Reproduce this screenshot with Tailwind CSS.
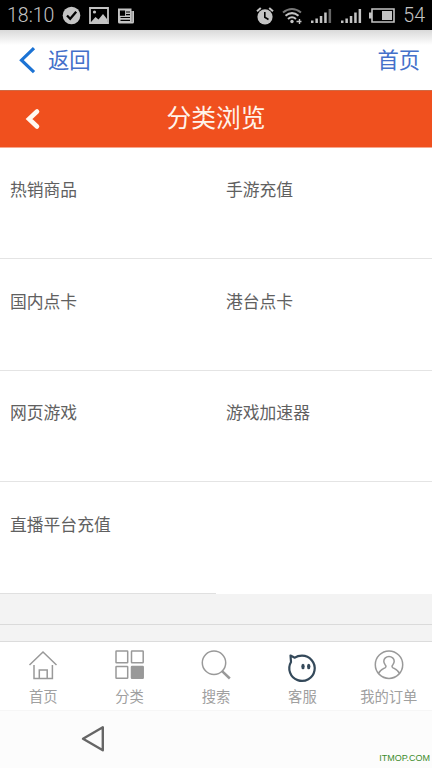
<!DOCTYPE html>
<html lang="zh-CN">
<head>
    <meta charset="UTF-8">
    <meta name="viewport" content="width=device-width, initial-scale=1.0">
    <title>分类浏览</title>
    <script src="https://cdn.jsdelivr.net/npm/@tailwindcss/browser@4"></script>
</head>
<body class="w-[432px] h-[768px] overflow-hidden flex flex-col bg-[#f3f3f3] font-['Noto_Sans_CJK_SC',sans-serif]">
    <!-- Status bar -->
    <div class="h-[30px] shrink-0 bg-black text-[#c4c4c4] flex items-center justify-between pl-[7px] pr-[7px] pt-px font-[Roboto,sans-serif] font-light text-[19.5px]">
        <div class="flex items-center">
            <span class="w-[55px] whitespace-nowrap">18:10</span>
            <svg class="w-[19px] h-[19px]" viewBox="0 0 19 19"><circle cx="9.5" cy="9.5" r="8.8" fill="#c4c4c4"/><path d="M5 9.5l3.2 3.3 6-7" fill="none" stroke="#000" stroke-width="2.3"/></svg>
            <svg class="w-5 h-[17px] ml-2" viewBox="0 0 20 17"><path d="M1 1h18v15H1z" fill="none" stroke="#c4c4c4" stroke-width="1.8"/><path d="M2 15l4.5-5 3 2.5L14 7l4 5v3z" fill="#c4c4c4"/><circle cx="5.5" cy="5" r="1.6" fill="#c4c4c4"/></svg>
            <svg class="w-4 h-4 ml-[9px]" viewBox="0 0 16 16"><path d="M0 .5h13.5V3H16v11q0 1.5-1.5 1.5h-13Q0 15.5 0 14z" fill="#c4c4c4"/><path d="M2.5 3.2h4v4h-4zM8 4h4M8 6.7h4M2.5 9.5H12M2.5 12.3H12" fill="none" stroke="#000" stroke-width="1.2"/><path d="M2.5 3.2h4v4h-4z"/><path d="M14 3v11" stroke="#777" stroke-width=".8"/></svg>
        </div>
        <div class="flex items-center">
            <svg class="w-[18px] h-[18px]" viewBox="0 0 18 18"><circle cx="9" cy="9.8" r="7.6" fill="#c4c4c4"/><path d="M1 4.3L4.8 1M13.2 1L17 4.3" stroke="#c4c4c4" stroke-width="2"/><path d="M8.8 5v5.3l3.7 2.2" fill="none" stroke="#000" stroke-width="1.6"/></svg>
            <svg class="w-5 h-[18px] ml-2" viewBox="0 0 20 18" fill="none" stroke="#c4c4c4" stroke-width="2"><path d="M1 5.5Q10-1.5 19 5.5" stroke="#777"/><path d="M3.5 8.8Q10 3.5 16.5 8.8M6 12Q10 8.5 14 12"/><circle cx="10" cy="14.5" r="1.7" fill="#c4c4c4" stroke="none"/><path d="M14.500 14.5h5M17.5 12v5" stroke-width="1.4"/></svg>
            <svg class="w-[22px] h-[15px] ml-2" viewBox="0 0 22 15" fill="#c4c4c4"><path d="M1 12.5h2.500V15H1zM5.400 10.500h2.500V15H5.400zM9.800 8h2.500v7H9.800zM14.200 4.500h2.500V15h-2.500z"/><path d="M18.600 1h2.500v14h-2.500z" fill="#666"/></svg>
            <svg class="w-[22px] h-[15px] ml-2" viewBox="0 0 22 15" fill="#c4c4c4"><path d="M1 12.5h2.500V15H1zM5.400 10.500h2.500V15H5.400zM9.800 8h2.500v7H9.800zM14.200 4.500h2.500V15h-2.500zM18.600 1h2.500v14h-2.500z"/></svg>
            <svg class="w-[26px] h-[15px] ml-[7px]" viewBox="0 0 26 15"><path d="M3 1h22v13H3z" fill="none" stroke="#c4c4c4" stroke-width="1.6"/><path d="M0 4.5h3v6H0zM13 3h10v9H13z" fill="#c4c4c4"/></svg>
            <span class="ml-2">54</span>
        </div>
    </div>

    <!-- Browser nav -->
    <div class="h-[60px] shrink-0 flex items-center justify-between pl-[18px] pr-3 text-[21.3px] text-[#4470ca] bg-linear-to-b from-[#d9d9d9] via-white via-25% to-white">
        <a class="flex items-center" href="#">
            <svg class="w-[18px] h-[28px]" viewBox="0 0 18 28"><path d="M16 2.2L3.500 14.2 16 26.200" fill="none" stroke="#1c73d4" stroke-width="3.2"/></svg>
            <span class="ml-3 pb-0.5">返回</span>
        </a>
        <a class="pb-0.5" href="#">首页</a>
    </div>

    <!-- Page title -->
    <header class="h-[57.5px] shrink-0 grid grid-cols-3 items-center bg-[#f0501e] border-t border-b border-t-[#cf6a45] border-b-[#f7a78e] text-[#fff3ea]">
        <svg class="w-4 h-6 ml-[25px] mt-px" viewBox="0 0 16 24"><path d="M12 4.5L4 12l8 7.500" fill="none" stroke="#fff8f0" stroke-width="4.6" stroke-linecap="round"/></svg>
        <h1 class="text-[24.8px] text-center whitespace-nowrap pb-1">分类浏览</h1>
    </header>

    <!-- Categories -->
    <ul class="grid grid-cols-2 auto-rows-[111.5px] shrink-0 bg-white text-[16.8px] leading-6 text-[#606060]">
        <li class="pl-2.5 pt-[29px] border-b border-[#e4e4e4]">热销商品</li>
        <li class="pl-2.5 pt-[29px] border-b border-[#e4e4e4]">手游充值</li>
        <li class="pl-2.5 pt-[30px] border-b border-[#e4e4e4]">国内点卡</li>
        <li class="pl-2.5 pt-[30px] border-b border-[#e4e4e4]">港台点卡</li>
        <li class="pl-2.5 pt-[29.5px] border-b border-[#e4e4e4]">网页游戏</li>
        <li class="pl-2.5 pt-[29.5px] border-b border-[#e4e4e4]">游戏加速器</li>
        <li class="pl-2.5 pt-[30px] border-b border-[#e0e0e0]">直播平台充值</li>
    </ul>
    <div class="h-[31.5px] shrink-0 border-b border-[#dadada]"></div>
    <div class="h-4 shrink-0"></div>

    <!-- Tab bar -->
    <nav class="h-[69px] shrink-0 grid grid-cols-5 bg-white border-t border-[#dcdcdc] text-[14.3px] leading-5 text-[#a0a0a0]">
        <a class="flex flex-col items-center pt-2" href="#">
            <svg class="w-[30px] h-[30px]" viewBox="0 0 30 30" fill="none" stroke="#999" stroke-width="1.5"><path d="M1.500 15L15 2l13.500 13M6 15v13.500h18.400V15M11.300 28.200v-8.200h7.900v8.200"/></svg>
            <span class="mt-1.5">首页</span>
        </a>
        <a class="flex flex-col items-center pt-2" href="#">
            <svg class="w-[30px] h-[30px]" viewBox="0 0 30 30" fill="none" stroke="#999" stroke-width="1.5"><rect x="1" y="1" width="11.7" height="11.7" rx=".5"/><rect x="16.5" y="1" width="11.7" height="11.7" rx=".5"/><rect x="1" y="16.5" width="11.7" height="11.7" rx=".5"/><rect x="16.5" y="16.5" width="11.7" height="11.7" rx=".5" fill="#999"/></svg>
            <span class="mt-1.5">分类</span>
        </a>
        <a class="flex flex-col items-center pt-2" href="#">
            <svg class="w-[30px] h-[30px]" viewBox="0 0 30 30" fill="none" stroke="#999" stroke-width="1.5"><circle cx="13" cy="12.8" r="11.7"/><path d="M20.8 20.8l8 7.700" stroke-width="2.5"/></svg>
            <span class="mt-1.5">搜索</span>
        </a>
        <a class="flex flex-col items-center pt-2" href="#">
            <svg class="w-[30px] h-[30px] overflow-visible" viewBox="0 0 30 30"><path d="M4 12L3.500 5.500l4.300 2.200C10.500 5.800 13 5.700 15 5.700A12.700 12.600 0 1 1 4 12z" fill="none" stroke="#34495a" stroke-width="2.2" stroke-linejoin="round"/><ellipse cx="16" cy="16.5" rx="1.7" ry="2.7" fill="#34495a"/><ellipse cx="21.7" cy="16.5" rx="1.7" ry="2.7" fill="#34495a"/></svg>
            <span class="mt-1.5">客服</span>
        </a>
        <a class="flex flex-col items-center pt-2" href="#">
            <svg class="w-[30px] h-[30px]" viewBox="0 0 30 30" fill="none" stroke="#999" stroke-width="1.5"><circle cx="15" cy="14.7" r="13.7"/><path d="M4.500 23.500C5.500 20.500 8 19.500 11 17.800C12.300 17 12.200 16 11.300 15C10.300 13.800 9.800 12.500 9.800 11.300a5.200 4.800 0 0 1 10.400 0C20.200 12.500 19.700 13.800 18.700 15C17.800 16 17.700 17 19 17.800C22 19.500 24.500 20.500 25.500 23.500"/></svg>
            <span class="mt-1.5 whitespace-nowrap">我的订单</span>
        </a>
    </nav>

    <!-- System navigation -->
    <footer class="flex-1 flex justify-between bg-[#fcfcfc] border-t border-[#f6f6f6]">
        <svg class="w-[26px] h-7 ml-20 mt-[14px]" viewBox="0 0 26 28"><path d="M3 13.800L22.800 2.300v23z" fill="none" stroke="#666" stroke-width="2.4" stroke-linejoin="round"/></svg>
        <span class="self-end pr-[2px] pb-1 text-[9px] leading-3 text-[#3c8c2c] font-['Liberation_Sans',sans-serif]">ITMOP.COM</span>
    </footer>
</body>
</html>
